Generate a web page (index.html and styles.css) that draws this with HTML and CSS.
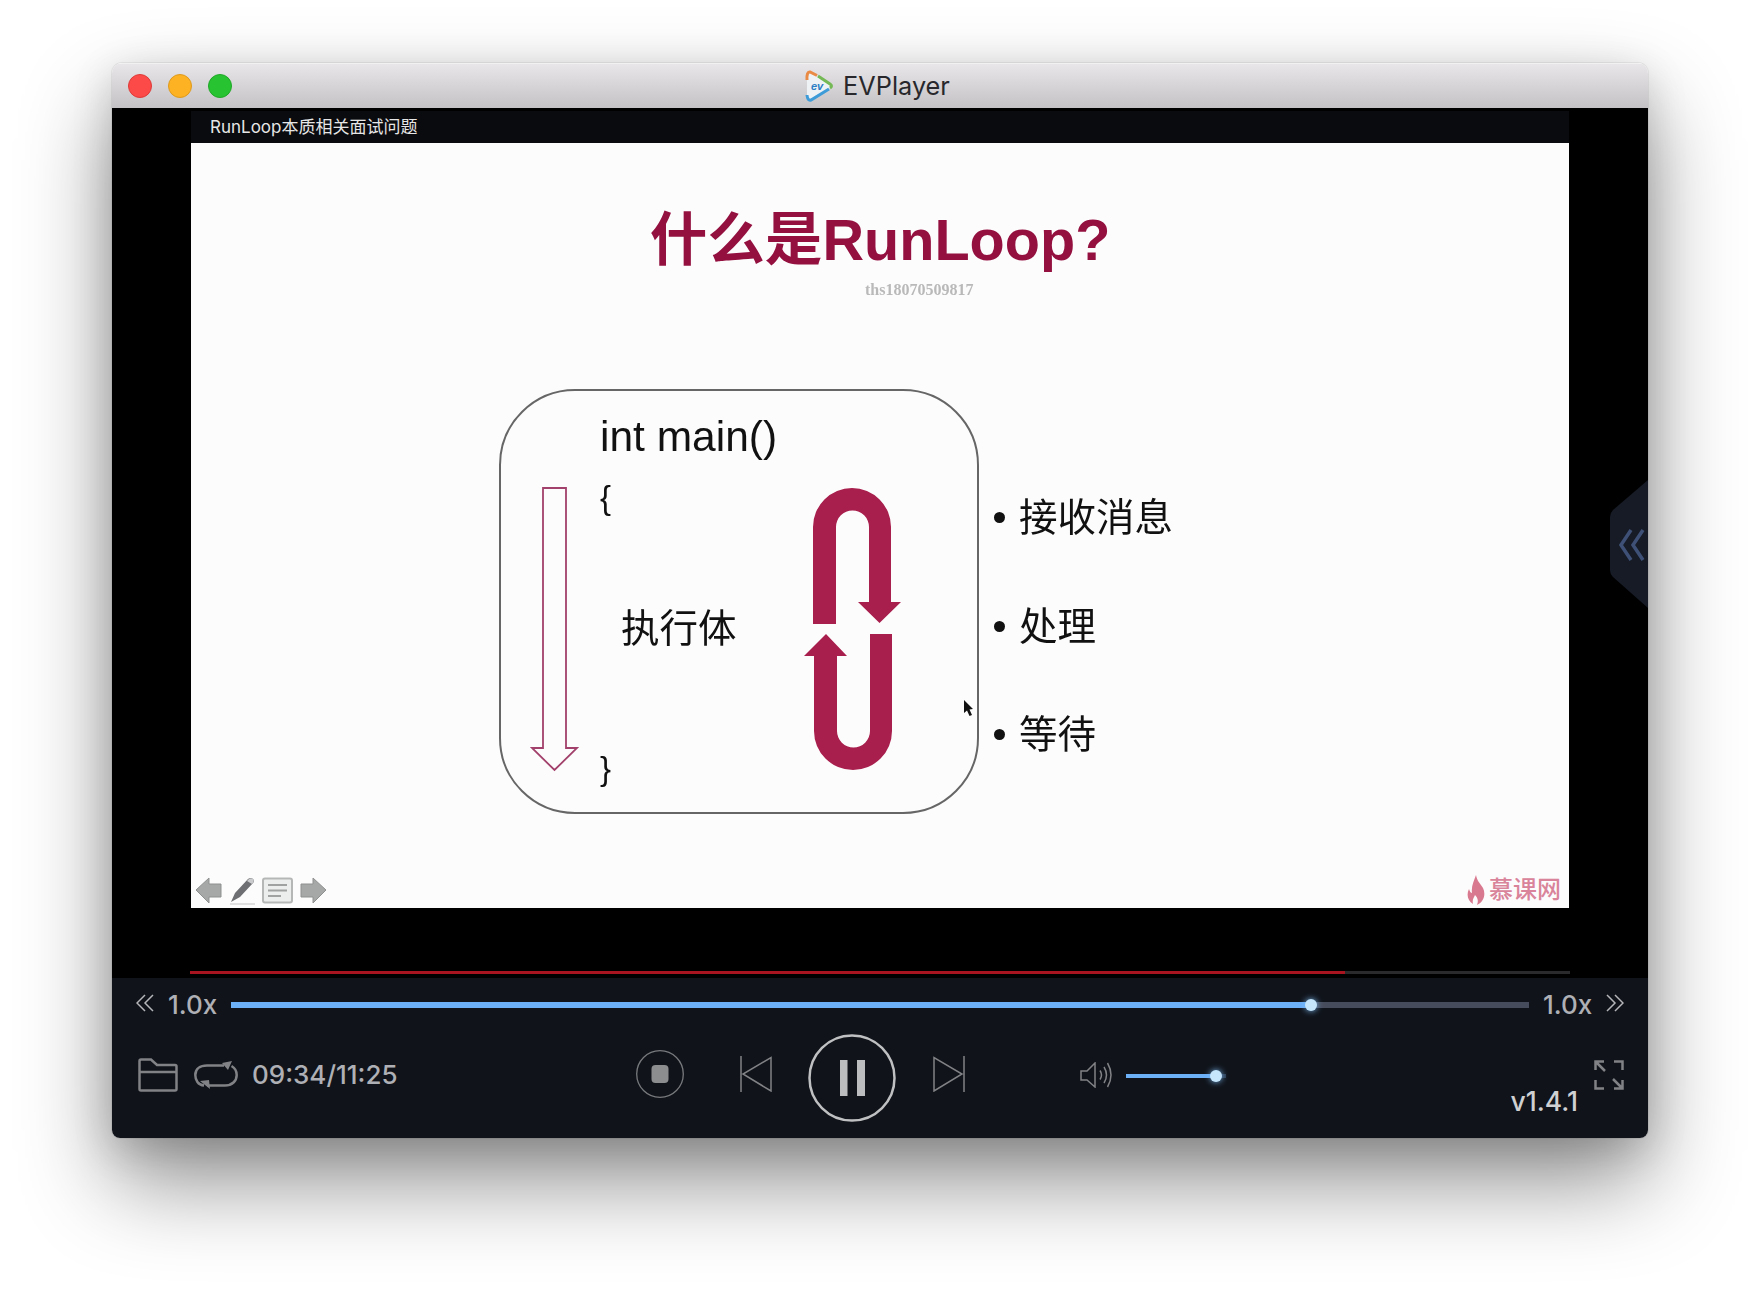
FILE: index.html
```html
<!DOCTYPE html>
<html>
    <head>
        <meta charset="utf-8">
        <title>EVPlayer</title>
        <link rel="stylesheet" href="styles.css">
    </head>
    <body>
        <div class="window">
            <div class="titlebar">
                <div class="lights">
                    <span class="light red"></span>
                    <span class="light yellow"></span>
                    <span class="light green"></span>
                </div>
                <div class="apptitle">
                    <svg class="applogo" width="30" height="34" viewBox="0 0 30 34">
                        <path d="M6 3 Q3 2 3 5 L3 29 Q3 32 6 31 L26 19 Q29 17 26 15 Z" fill="#eef2f5"/>
                        <path d="M3 11 Q2.500 2.500 6 3 L13 6.500" fill="none" stroke="#e98a45" stroke-width="3"/>
                        <path d="M14 7 L26 15 Q29 17 26 19" fill="none" stroke="#74b956" stroke-width="3"/>
                        <path d="M25 20 L7 31 Q3.500 32 3 26" fill="none" stroke="#3d9bd8" stroke-width="3"/>
                        <text class="applogo-text" x="7" y="21">ev</text>
                    </svg>
                    <span class="appname">EVPlayer</span>
                </div>
            </div>

            <div class="stage">
                <div class="video">
                    <div class="videotitle">RunLoop本质相关面试问题</div>
                    <div class="slide">
                        <h1 class="slidetitle">什么是RunLoop?</h1>
                        <div class="watermark">ths18070509817</div>

                        <div class="box">
                            <div class="code main">int main()</div>
                            <div class="code brace open">{</div>
                            <div class="code body">执行体</div>
                            <div class="code brace close">}</div>
                        </div>

                        <svg class="arrows" width="480" height="424" viewBox="499 390 480 424">
                            <path class="arrow-outline" d="M543 488 H566 V748 H577 L554.500 770 L532 748 H543 Z"/>
                            <path class="arrow-fill" d="M813 624 V527 A39 39 0 0 1 891 527 V602 H901 L879.500 623 L858 602 H869 V527 A16.500 16.500 0 0 0 836 527 V624 Z"/>
                            <path class="arrow-fill" d="M892 634 V731 A39 39 0 0 1 814 731 V656 H804 L826 634 L847 656 H837 V731 A16.500 16.500 0 0 0 870 731 V634 Z"/>
                            <path d="M964 700 L964 713 L967 710.500 L969.500 716 L972 715 L969.500 709.500 L973 709 Z" fill="#111"/>
                        </svg>

                        <ul class="bullets">
                            <li>接收消息</li>
                            <li>处理</li>
                            <li>等待</li>
                        </ul>

                        <div class="slidetools">
                            <svg width="132" height="30" viewBox="0 0 132 30">
                                <path d="M1 14 L14 2 V8 H26 V21 H14 V27 Z" fill="#a6a8a8" stroke="#8e9090"/>
                                <path d="M36 26 L40 17 L53 3 Q56 1 58 3 Q60 5 58 7 L45 21 Z" fill="#6d6f72"/>
                                <path d="M52 5 Q55 1 58 3 Q60 5 57 8 Z" fill="#c9cbcc"/>
                                <path d="M35 28 H60" stroke="#d5d6d6" stroke-width="1.500"/>
                                <rect x="68" y="2.500" width="29" height="24" rx="2" fill="#eceded" stroke="#b5b7b7" stroke-width="2"/>
                                <path d="M73 9 H92 M73 14.500 H92 M73 20 H86" stroke="#a0a2a2" stroke-width="2"/>
                                <path d="M131 14 L118 2 V8 H106 V21 H118 V27 Z" fill="#a6a8a8" stroke="#8e9090"/>
                            </svg>
                        </div>

                        <div class="imooc">
                            <svg width="18" height="30" viewBox="0 0 18 30">
                                <path d="M9 0 C10 6 13 8 16 13 C19 19 17 27 10 30 C12 25 10 22 8 20 C7 23 5 24 6 29 C1 26 -1 20 2 14 C3 17 4 18 5 18 C4 11 7 6 9 0 Z" fill="#d9798f"/>
                            </svg>
                            <span class="imooc-name">慕课网</span>
                        </div>
                    </div>
                </div>

                <div class="playedbar">
                    <div class="playedbar-fill"></div>
                </div>

                <svg class="sidetab" width="38" height="128" viewBox="0 0 38 128">
                    <path d="M38 0 L3 30 Q0 33 0 37 V90 Q0 94 3 97 L38 128 Z" fill="#161b26"/>
                    <path d="M21 50 L11 65 L21 80 M33 50 L23 65 L33 80" fill="none" stroke="#3f5076" stroke-width="3.500"/>
                </svg>
            </div>

            <div class="panel">
                <div class="speedrow">
                    <svg width="18" height="18" viewBox="0 0 18 18" class="chevrons">
                        <path d="M9 1 L1 9 L9 17 M17 1 L9 9 L17 17"/>
                    </svg>
                    <span class="speed">1.0x</span>
                    <div class="track">
                        <div class="track-fill"></div>
                        <span class="knob"></span>
                    </div>
                    <span class="speed">1.0x</span>
                    <svg width="18" height="18" viewBox="0 0 18 18" class="chevrons">
                        <path d="M1 1 L9 9 L1 17 M9 1 L17 9 L9 17"/>
                    </svg>
                </div>

                <div class="controls">
                    <div class="leftgroup">
                        <svg width="40" height="34" viewBox="0 0 40 34" class="icon thick">
                            <path d="M1.500 31 V3 Q1.500 1.500 3 1.500 H13 L19 7 H37 Q38.500 7 38.500 8.500 V31 Q38.500 32.500 37 32.500 H3 Q1.500 32.500 1.500 31 Z M1.500 14 H38.500"/>
                        </svg>
                        <svg width="44" height="28" viewBox="0 0 44 28" class="icon thick">
                            <path d="M10 24.500 C4 24 1.300 19 1.300 14 C1.300 8 6 4.500 13 4.500 H30 M37.500 5 C41 7 42.700 10.500 42.700 14 C42.700 20 38 24.500 31 24.500 H13"/>
                            <path class="solid" d="M28 2 L38 0 L34 9 Z M6 20 L15 19 L16 28 Z"/>
                        </svg>
                        <span class="time">09:34/11:25</span>
                    </div>

                    <div class="transport">
                        <svg class="stop" width="48" height="48" viewBox="0 0 48 48">
                            <circle cx="24" cy="24" r="23.300" fill="none" stroke="#77797c" stroke-width="1.300"/>
                            <rect x="15.500" y="15" width="17" height="18" rx="4" fill="#8c8d8f"/>
                        </svg>
                        <svg class="prev icon" width="32" height="36" viewBox="0 0 32 36">
                            <path d="M1 0 V36 M31 1.500 V35 L3 18 Z"/>
                        </svg>
                        <svg class="pause" width="88" height="88" viewBox="0 0 88 88">
                            <circle cx="44" cy="44" r="42.500" fill="none" stroke="#bfc0c1" stroke-width="2.500"/>
                            <rect x="32" y="26" width="7.500" height="36" fill="#bcbdbe"/>
                            <rect x="49" y="26" width="8" height="36" fill="#bcbdbe"/>
                        </svg>
                        <svg class="next icon" width="32" height="36" viewBox="0 0 32 36">
                            <path d="M31 0 V36 M1 1.500 V35 L29 18 Z"/>
                        </svg>
                    </div>

                    <div class="volume">
                        <svg class="icon" width="32" height="26" viewBox="0 0 32 26">
                            <path d="M1 9 H7 L15 1 V25 L7 18 H1 Z M20 8.500 Q23 13 20 17.500 M24 5 Q29 13 24 21 M27.500 1 Q34.500 13 27.500 25"/>
                        </svg>
                        <div class="voltrack">
                            <div class="voltrack-fill"></div>
                            <span class="knob small"></span>
                        </div>
                    </div>

                    <span class="version">v1.4.1</span>
                    <svg width="30" height="30" viewBox="0 0 30 30" class="icon thick expand">
                        <path d="M1.500 10 V1.500 H10 M20 1.500 H28.500 V10 M1.500 20 V28.500 H10 M20 28.500 H28.500 V20 M2 2 L11 11 M28 28 L19 19"/>
                    </svg>
                </div>
            </div>
        </div>
    </body>
</html>
```

FILE: styles.css
```css
html, body {
    margin: 0;
    height: 1298px;
    overflow: hidden;
    background: #fff;
}

body {
    padding: 63px 112px 0;
    box-sizing: border-box;
    font-family: Inter, "Liberation Sans", "Noto Sans CJK SC", sans-serif;
}

.window {
    width: 1536px;
    height: 1075px;
    display: flex;
    flex-direction: column;
    border-radius: 10px 10px 8px 8px;
    overflow: hidden;
    box-shadow: 0 44px 90px rgba(0, 0, 0, 0.44), 0 10px 40px rgba(0, 0, 0, 0.15), 0 0 0 1px rgba(0, 0, 0, 0.06);
}

/* title bar */
.titlebar {
    height: 45px;
    flex: none;
    position: relative;
    display: flex;
    align-items: center;
    justify-content: center;
    background: linear-gradient(#e8e6e8, #c4c2c4);
    border-top: 1px solid #f2f1f2;
    box-sizing: border-box;
}

.lights {
    position: absolute;
    left: 16px;
    top: 10px;
    display: flex;
    gap: 16px;
}

.light {
    width: 24px;
    height: 24px;
    border-radius: 50%;
    box-sizing: border-box;
}

.red { background: #fc4a48; border: 1px solid #dd3b39; }
.yellow { background: #fdb224; border: 1px solid #de9a1c; }
.green { background: #28c331; border: 1px solid #20a828; }

.apptitle {
    display: flex;
    align-items: center;
    gap: 9px;
    margin-left: -6px;
}

.applogo-text {
    font: italic bold 11px "Liberation Sans", sans-serif;
    fill: #2f7fc4;
}

.appname {
    font-size: 25.300px;
    color: #28282c;
    line-height: 30px;
}

/* video area */
.stage {
    height: 870px;
    flex: none;
    position: relative;
    background: #000;
    display: flex;
    flex-direction: column;
    align-items: center;
    padding-top: 3px;
    box-sizing: border-box;
}

.video {
    width: 1378px;
}

.videotitle {
    height: 32px;
    background: #0a0b0e;
    color: #e6e6e6;
    padding-left: 19px;
    font-size: 17px;
    line-height: 32px;
}

.slide {
    height: 765px;
    position: relative;
    background: #fdfcfd;
    overflow: hidden;
    font-family: "Liberation Sans", "Noto Sans CJK SC", sans-serif;
    color: #111;
}

.slidetitle {
    margin: 0;
    padding-top: 64px;
    text-align: center;
    font-size: 57.600px;
    line-height: 66px;
    font-weight: bold;
    color: #93103f;
    filter: blur(0.4px);
}

.watermark {
    position: absolute;
    left: 674px;
    top: 138px;
    font: bold 16px "Liberation Serif", serif;
    color: #b9b9b9;
    filter: blur(0.6px);
}

.box {
    position: absolute;
    left: 308px;
    top: 246px;
    width: 480px;
    height: 425px;
    box-sizing: border-box;
    border: 2px solid #666;
    border-radius: 76px;
}

.code {
    position: absolute;
    white-space: nowrap;
    filter: blur(0.3px);
}

.main {
    left: 99px;
    top: 21px;
    font-size: 42.500px;
    line-height: 50px;
}

.brace {
    left: 99px;
    font-size: 33px;
    line-height: 38px;
}

.open { top: 88px; }
.close { top: 359px; }

.body {
    left: 120px;
    top: 213px;
    font-size: 38.500px;
    line-height: 50px;
}

.arrows {
    position: absolute;
    left: 308px;
    top: 247px;
}

.arrow-outline {
    fill: none;
    stroke: #a2416b;
    stroke-width: 1.8;
}

.arrow-fill {
    fill: #a81e4d;
}

.bullets {
    position: absolute;
    left: 828px;
    top: 348px;
    margin: 0;
    padding: 0;
    list-style: none;
    font-size: 38.500px;
    line-height: 54px;
    filter: blur(0.3px);
}

.bullets li {
    height: 108.500px;
    display: flex;
    gap: 14px;
}

.bullets li::before {
    content: "";
    width: 11px;
    height: 11px;
    margin: 21px 0 0 -25px;
    border-radius: 50%;
    background: #111;
    flex: none;
}

.slidetools {
    position: absolute;
    left: 4px;
    bottom: 2px;
    line-height: 0;
    filter: blur(0.5px);
}

.imooc {
    position: absolute;
    right: 8px;
    bottom: 3px;
    display: flex;
    align-items: center;
    gap: 4px;
}

.imooc-name {
    font-size: 24px;
    line-height: 30px;
    font-weight: 500;
    color: #d9849a;
}

.playedbar {
    width: 1380px;
    height: 3px;
    margin-top: 63px;
    background: #2a2a2c;
}

.playedbar-fill {
    width: 1155px;
    height: 3px;
    background: #a8141f;
}

.sidetab {
    position: absolute;
    right: 0;
    top: 372px;
}

/* controls */
.panel {
    flex: 1;
    background: #10131a;
    color: #aeb0b5;
}

.speedrow {
    height: 54px;
    display: flex;
    align-items: center;
    gap: 14px;
    padding: 0 24px;
}

.chevrons {
    fill: none;
    stroke: #b5b6b9;
    stroke-width: 1.500;
    margin-top: -4px;
}

.speed {
    font-size: 26px;
    line-height: 30px;
    width: 49px;
    font-weight: 500;
    white-space: nowrap;
}

.track {
    flex: 1;
    height: 6px;
    position: relative;
    background: #474c5c;
}

.track-fill {
    width: 1080px;
    height: 6px;
    background: #6cb0f8;
}

.knob {
    position: absolute;
    left: 1074px;
    top: -3px;
    width: 12px;
    height: 12px;
    border-radius: 50%;
    background: #c5e6fb;
    box-shadow: 0 0 6px #7dbdf5;
}

.controls {
    height: 86px;
    display: flex;
    align-items: center;
    position: relative;
}

.icon {
    fill: none;
    stroke: #808285;
    stroke-width: 1.500;
    flex: none;
}

.thick {
    stroke-width: 2.500;
}

.solid {
    fill: #808285;
    stroke: none;
}

.leftgroup {
    width: 524px;
    padding-left: 26px;
    box-sizing: border-box;
    display: flex;
    align-items: center;
    gap: 16px;
    flex: none;
}

.time {
    font-size: 26px;
    line-height: 30px;
    margin-left: -2px;
    font-weight: 500;
    white-space: nowrap;
}

.transport {
    display: flex;
    align-items: center;
    flex: none;
}

.stop { margin-right: 56px; margin-top: -2px; }
.prev { margin-right: 36px; margin-top: -2px; }
.pause { margin-right: 37px; margin-top: 6px; }
.next { margin-top: -2px; }

.volume {
    display: flex;
    align-items: center;
    gap: 14px;
    margin-left: 115px;
    flex: none;
}

.voltrack {
    width: 100px;
    height: 4px;
    position: relative;
    background: #2b3a50;
    margin-top: 2px;
}

.voltrack-fill {
    width: 90px;
    height: 4px;
    background: #6cb0f8;
}

.knob.small {
    left: 84px;
    top: -4px;
    width: 12px;
    height: 12px;
}

.version {
    margin-left: auto;
    align-self: flex-end;
    font-size: 26.500px;
    line-height: 30px;
    font-weight: 500;
    color: #cfd0d2;
    margin-bottom: 2px;
}

.expand {
    margin: 0 24px 0 16px;
}
```
